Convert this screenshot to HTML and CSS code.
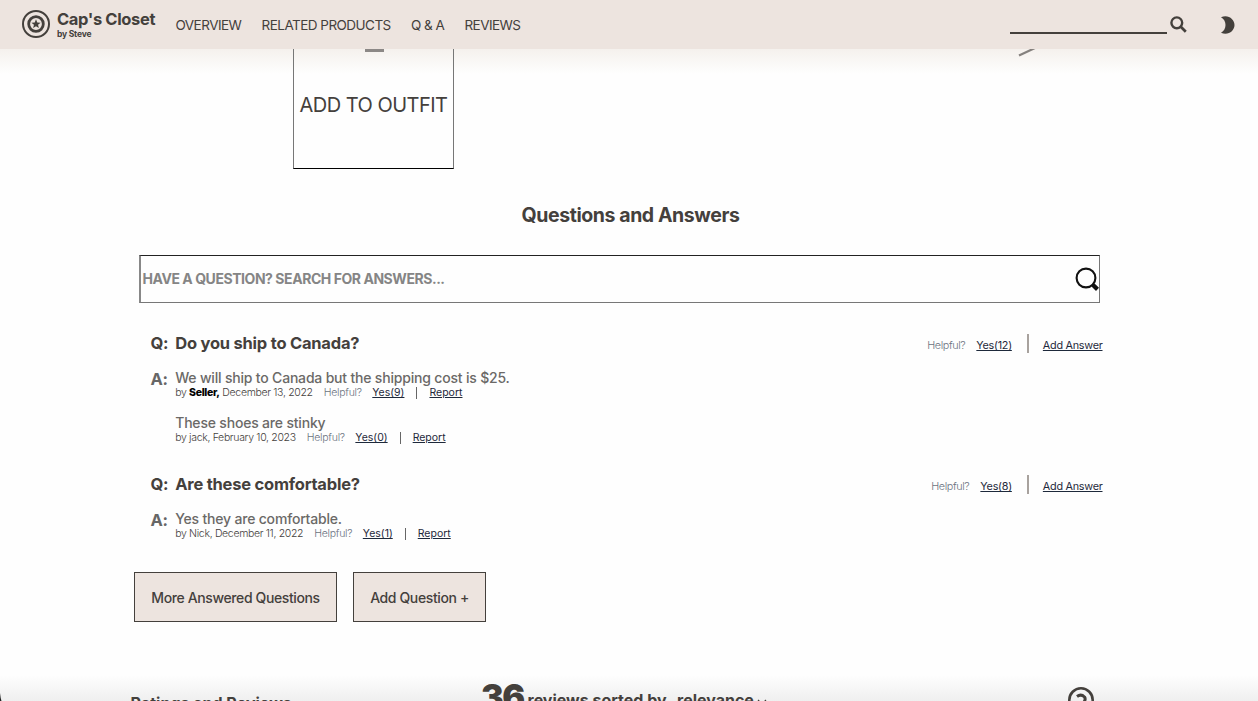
FILE: index.html
```html
<!DOCTYPE html>
<html lang="en">
<head>
<meta charset="utf-8">
<title>Cap's Closet</title>
<link rel="stylesheet" href="styles.css">
</head>
<body>
<header class="navbar">
  <svg class="logo" viewBox="0 0 28 28"><circle cx="14" cy="14" r="13" fill="none" stroke="currentColor" stroke-width="2"/><circle cx="14" cy="14" r="7.3" fill="none" stroke="currentColor" stroke-width="2.8"/><path fill="currentColor" d="M14 9.3l1.25 3.1 3.35.25-2.55 2.15.8 3.25L14 16.3l-2.85 1.75.8-3.25-2.55-2.15 3.35-.25z"/></svg>
  <div class="brand"><span class="brand-name">Cap's Closet</span><span class="brand-by">by Steve</span></div>
  <nav class="links"><a>OVERVIEW</a><a>RELATED PRODUCTS</a><a>Q &amp; A</a><a>REVIEWS</a></nav>
  <div class="nav-search"></div>
  <svg class="nav-glass" viewBox="0 0 17 17"><circle cx="6.8" cy="6.8" r="5.4" fill="none" stroke="currentColor" stroke-width="2.4"/><path d="M10.8 10.8l5 5" stroke="currentColor" stroke-width="2.7"/></svg>
  <svg class="moon" viewBox="0 0 14 18"><path fill="currentColor" d="M0 1.2C7-2 13.5 3 13.5 9S7 20 0 16.8C6 13.500 6 4.500 0 1.200z"/></svg>
</header>
<main class="page">
  <section class="outfit">
    <div class="outfit-card"><span class="plus"></span><span class="outfit-label">ADD TO OUTFIT</span></div>
    <svg class="arrow" viewBox="0 0 18 8"><path d="M1 6.500L17-1" stroke="#85817e" stroke-width="2.200"/></svg>
  </section>
  <h2 class="title">Questions and Answers</h2>
  <div class="search"><span>HAVE A QUESTION? SEARCH FOR ANSWERS...</span>
    <svg class="search-icon" viewBox="0 0 24 24"><circle cx="11" cy="11" r="9.400" fill="none" stroke="#111" stroke-width="2.100"/><path d="M17.300 17.300l1.500 1.500" stroke="#111" stroke-width="2"/><path d="M18 18l4.500 4.300" stroke="#111" stroke-width="4.400"/></svg>
  </div>
  <section class="qa">
    <div class="question"><b class="mark">Q:</b><h3>Do you ship to Canada?</h3><div class="actions"><span>Helpful?</span><u>Yes(12)</u><i class="bar"></i><u>Add Answer</u></div></div>
    <div class="answer"><b class="mark">A:</b><div><p>We will ship to Canada but the shipping cost is $25.</p><div class="meta"><span class="author">by <b>Seller,</b> December 13, 2022</span><span class="help">Helpful?</span><u>Yes(9)</u><i class="rule"></i><u>Report</u></div></div></div>
    <div class="answer second"><b class="mark"></b><div><p>These shoes are stinky</p><div class="meta"><span class="author">by jack, February 10, 2023</span><span class="help">Helpful?</span><u>Yes(0)</u><i class="rule"></i><u>Report</u></div></div></div>
  </section>
  <section class="qa next">
    <div class="question"><b class="mark">Q:</b><h3>Are these comfortable?</h3><div class="actions"><span>Helpful?</span><u>Yes(8)</u><i class="bar"></i><u>Add Answer</u></div></div>
    <div class="answer"><b class="mark">A:</b><div><p>Yes they are comfortable.</p><div class="meta"><span class="author">by Nick, December 11, 2022</span><span class="help">Helpful?</span><u>Yes(1)</u><i class="rule"></i><u>Report</u></div></div></div>
  </section>
  <div class="buttons"><button class="more">More Answered Questions</button><button class="add">Add Question +</button></div>
  <section class="reviews">
    <h4>Ratings and Reviews</h4>
    <strong class="count">36</strong><span class="sorted">reviews sorted by</span><span class="relevance">relevance</span>
    <svg class="chevron" viewBox="0 0 10 8"><path d="M1 2l4 4 4-4" fill="none" stroke="currentColor" stroke-width="1.200"/></svg>
    <svg class="review-icon" viewBox="0 0 26 26"><circle cx="13" cy="13" r="11.700" fill="none" stroke="currentColor" stroke-width="2.600"/><path d="M9 9.500q4-3 7.500.5 1.500 2-.5 5" fill="none" stroke="currentColor" stroke-width="3"/></svg>
  </section>
</main>
<svg class="corner" viewBox="0 0 2 8"><path d="M0 0q.5 5 1.500 8H0z" fill="#222"/></svg>
</body>
</html>
```
FILE: styles.css
```css
* { box-sizing: border-box; }
body { position: relative; margin: 0; width: 1258px; height: 701px; overflow: hidden; background: #fefefe; color: #44403c; font-family: Inter, "Liberation Sans", sans-serif; }
h2, h3, h4, p { margin: 0; }
svg { display: block; flex: none; }
.navbar { display: flex; height: 49px; background: #ede4df; padding-left: 22px; white-space: nowrap; }
.navbar > * { flex: none; }
.logo { width: 28px; height: 28px; margin-top: 10px; }
.brand { width: 125.500px; padding: 9px 0 0 7px; display: flex; flex-direction: column; }
.brand-name { font-size: 16.500px; line-height: 20px; font-weight: 700; letter-spacing: -.35px; }
.brand-by { font-size: 8.500px; line-height: 11px; font-weight: 700; letter-spacing: -.2px; }
.links { display: flex; gap: 20.200px; width: 834.500px; padding-top: 15px; font-size: 13.500px; line-height: 20px; letter-spacing: -.53px; }
.nav-search { width: 157px; height: 34px; border-bottom: 2px solid #44403c; }
.nav-glass { width: 17px; height: 17px; margin: 16px 0 0 3px; }
.moon { width: 14px; height: 18px; margin: 16px 0 0 34px; }
.page { height: 652px; overflow: hidden; background: linear-gradient(#f5f1ed, #fefefe00 25px), linear-gradient(to top, #efefef, #fefefe00 26px); }
.outfit { display: flex; height: 120px; padding-left: 293px; }
.outfit-card { width: 161px; height: 120px; border: solid #777; border-width: 0 1.500px 1px; border-bottom-color: #000; display: flex; flex-direction: column; align-items: center; }
.plus { width: 19px; height: 3px; background: #8c8886; margin-left: 2px; }
.outfit-label { margin-top: 40px; font-size: 20px; line-height: 26px; white-space: nowrap; letter-spacing: -.53px; }
.arrow { width: 18px; height: 8px; margin-left: 564px; }
.title { margin-top: 33px; padding-left: 3px; text-align: center; font-size: 19.500px; line-height: 27px; letter-spacing: -.42px; }
.search { margin: 26px 0 0 139px; width: 961px; height: 48px; border: 1px solid #777; border-top-color: #222; border-left: 2px solid #888; display: flex; align-items: center; justify-content: space-between; padding-left: 1.500px; color: #858585; font-size: 14px; font-weight: 700; letter-spacing: -.45px; }
.search span { margin-top: -2px; }
.search-icon { width: 24px; height: 24px; }
.qa { margin: 28px 0 0 150.500px; width: 952px; height: 114px; white-space: nowrap; }
.question { display: flex; height: 26px; align-items: center; }
.question .mark, .question h3 { font-size: 16.500px; line-height: 20px; letter-spacing: -.22px; margin-top: -2px; }
.mark { width: 24.700px; flex: none; }
.actions { margin-left: auto; display: flex; align-items: center; font-size: 10.800px; line-height: 16px; padding-top: 4px; color: #1e293b; letter-spacing: -.26px; }
.actions span, .help { font-weight: 300; color: #6b7280; }
.actions span { margin-right: 11px; letter-spacing: -.4px; }
u { text-underline-offset: 1px; color: #1e293b; }
.bar { width: 2px; height: 19px; background: #a8a29e; margin: -6px 14px 0 15px; }
.answer { display: flex; margin-top: 12px; height: 31px; }
.answer .mark { font-size: 16.500px; line-height: 20px; color: #666; letter-spacing: -.3px; }
.answer p { font-size: 14px; line-height: 16px; font-weight: 500; color: #6b6967; letter-spacing: -.19px; padding-top: 1px; }
.answer.second { margin-top: 14px; }
.meta { display: flex; font-size: 10.500px; line-height: 14px; }
.author { font-weight: 300; margin-right: 11px; letter-spacing: -.33px; }
.author b { font-weight: 800; color: #000; }
.help { margin-right: 10.500px; letter-spacing: -.25px; }
.rule { width: 1px; height: 12px; background: #666; margin: 1px 12px 0; }
.next { height: 73px; margin-top: 27px; }
.buttons { display: flex; gap: 16px; margin: 27px 0 0 134px; }
button { height: 50px; border: 1px solid #44403c; background: #ede4df; color: #44403c; font: 500 14px Inter, sans-serif; padding: 0; white-space: nowrap; letter-spacing: -.38px; }
.more { width: 203px; }
.add { width: 133px; }
.reviews { display: flex; height: 79px; padding-left: 130.500px; white-space: nowrap; font-size: 16px; font-weight: 700; line-height: 20px; }
.reviews > * { flex: none; }
.reviews h4 { width: 350.500px; padding-top: 71px; font-size: 16px; }
.count { width: 46.500px; font-size: 34px; line-height: 44px; padding-top: 53px; letter-spacing: -1.500px; }
.sorted { width: 149.500px; padding-top: 68px; }
.relevance { width: 80px; padding-top: 68px; }
.chevron { width: 10px; height: 8px; margin-top: 76px; }
.review-icon { width: 26px; height: 26px; margin: 65px 0 0 301px; }
.corner { position: absolute; left: 0; bottom: 0; width: 2px; height: 8px; }
```
